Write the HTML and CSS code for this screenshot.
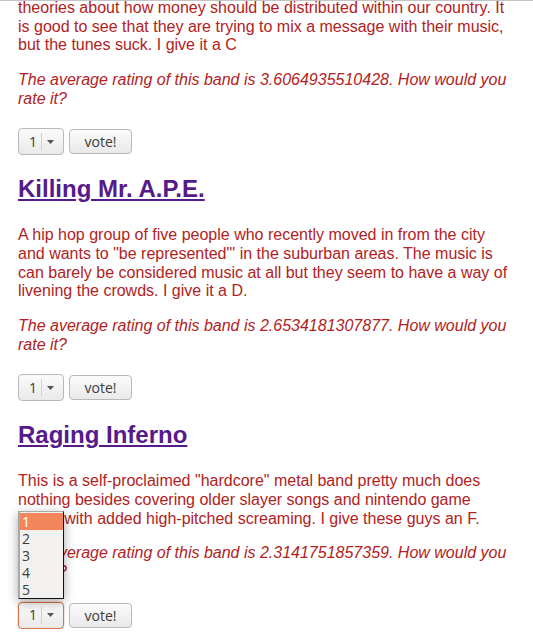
FILE: index.html
```html
<!DOCTYPE html>
<html>
<head>
<meta charset="utf-8">
<link rel="stylesheet" href="styles.css">
</head>
<body>
<div class="topline"></div>
<div class="page">
  <p class="first">theories about how money should be distributed within our country. It is good to see that they are trying to mix a message with their music, but the tunes suck. I give it a C</p>
  <p class="rating">The average rating of this band is 3.6064935510428. How would you rate it?</p>
  <div class="vote">
    <div class="sel"><span class="val">1</span><span class="div"></span><svg class="arrow" width="7" height="4" viewBox="0 0 7 4"><path d="M0 0H7L3.5 4Z" fill="#555"/></svg></div>
    <button class="btn">vote!</button>
  </div>

  <h2><a class="band" href="#">Killing Mr. A.P.E.</a></h2>
  <p>A hip hop group of five people who recently moved in from the city and wants to "be represented"' in the suburban areas. The music is can barely be considered music at all but they seem to have a way of livening the crowds. I give it a D.</p>
  <p class="rating">The average rating of this band is 2.6534181307877. How would you rate it?</p>
  <div class="vote">
    <div class="sel"><span class="val">1</span><span class="div"></span><svg class="arrow" width="7" height="4" viewBox="0 0 7 4"><path d="M0 0H7L3.5 4Z" fill="#555"/></svg></div>
    <button class="btn">vote!</button>
  </div>

  <h2><a class="band" href="#">Raging Inferno</a></h2>
  <p>This is a self-proclaimed "hardcore" metal band pretty much does nothing besides covering older slayer songs and nintendo game music with added high-pitched screaming. I give these guys an F.</p>
  <p class="rating">The average rating of this band is 2.3141751857359. How would you rate it?</p>
  <div class="vote">
    <div class="sel focus"><span class="val">1</span><span class="div"></span><svg class="arrow" width="7" height="4" viewBox="0 0 7 4"><path d="M0 0H7L3.5 4Z" fill="#555"/></svg>
      <ul class="menu">
        <li class="on">1</li>
        <li>2</li>
        <li>3</li>
        <li>4</li>
        <li>5</li>
      </ul>
    </div>
    <button class="btn">vote!</button>
  </div>
</div>
</body>
</html>
```

FILE: styles.css
```css
html, body {
  margin: 0;
  padding: 0;
  background: #ffffff;
}

body {
  font-family: "Liberation Sans", Arial, sans-serif;
  font-size: 16px;
  line-height: 18.67px;
  color: #b22222;
  overflow: hidden;
}

.topline {
  position: fixed;
  top: 0;
  left: 0;
  right: 0;
  height: 1px;
  background: #c4c4c4;
  z-index: 5;
}

.page {
  padding: 0 0 0 18px;
  width: 491px;
}

p {
  margin: 16px 0;
}

.first {
  margin-top: -1px;
}

.rating {
  font-style: italic;
}

h2 {
  font-size: 24px;
  line-height: 28px;
  font-weight: bold;
  margin: 20px 0 23px;
}

.band {
  color: #551a8b;
  text-decoration: underline;
}

.vote {
  display: flex;
  align-items: center;
  gap: 5px;
  margin-top: 20px;
  height: 27px;
}

.sel {
  position: relative;
  box-sizing: border-box;
  width: 46px;
  height: 27px;
  display: flex;
  align-items: center;
  border: 1px solid #b9b9b9;
  border-radius: 4px;
  background: linear-gradient(#fbfbfb, #e9e9e9);
  font-family: "Open Sans", "DejaVu Sans", sans-serif;
  font-size: 14px;
  color: #3c3c3c;
  padding-left: 10px;
}

.sel.focus {
  border-color: #d9744a;
  box-shadow: 0 0 0 0.5px rgba(217, 116, 74, 0.4);
}

.val {
  width: 8px;
}

.div {
  width: 1px;
  height: 17px;
  background: #d4d4d4;
  margin: 0 5px 0 4px;
}

.arrow {
  display: block;
}

.btn {
  box-sizing: border-box;
  width: 63px;
  height: 25px;
  border: 1px solid #b9b9b9;
  border-radius: 4px;
  background: linear-gradient(#fbfbfb, #e9e9e9);
  font-family: "Open Sans", "DejaVu Sans", sans-serif;
  font-size: 14px;
  color: #3c3c3c;
  padding: 0;
}

.menu {
  position: absolute;
  left: -1px;
  bottom: calc(100% + 4px);
  width: 46px;
  box-sizing: border-box;
  margin: 0;
  padding: 1px 0 0 0;
  list-style: none;
  background: #f2f1f0;
  border-left: 2px solid #a9a9a9;
  border-top: 1px solid #a9a9a9;
  border-right: 1px solid #111;
  border-bottom: 1px solid #111;
  box-shadow: 0 3px 10px rgba(0, 0, 0, 0.35);
  z-index: 10;
}

.menu li {
  height: 17px;
  line-height: 17px;
  padding-left: 2px;
  font-family: "Open Sans", "DejaVu Sans", sans-serif;
  font-size: 14px;
  color: #3c3c3c;
}

.menu li.on {
  background: #f2855a;
  color: #ffffff;
}
```
